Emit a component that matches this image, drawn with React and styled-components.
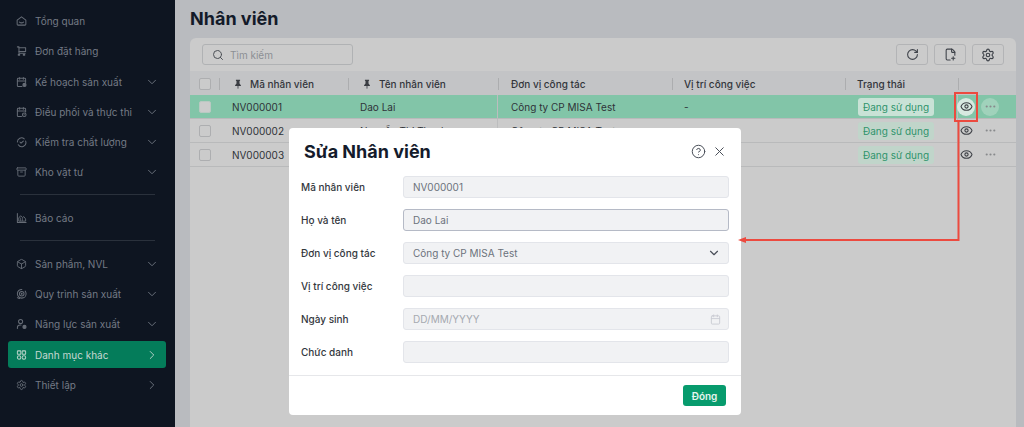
import React from "react";
import styled, { createGlobalStyle } from "styled-components";
import {
  Archive, Box, ChevronDown, ChevronRight, Search, RotateCw, FilePlus2, Eye, Ellipsis,
  CircleHelp, X, Calendar, Settings,
} from "lucide-react";

const Global = createGlobalStyle`
  html, body { margin: 0; padding: 0; height: 427px; overflow: hidden; background: #b9bbbf; }
  * { box-sizing: border-box; }
  body { font-family: Inter, "Liberation Sans", sans-serif; }
`;

const Page = styled.div`
  position: relative; width: 1024px; height: 427px; display: flex; overflow: hidden;
`;
const Sidebar = styled.nav`
  width: 175px; height: 427px; flex: none; background: #0e1521; padding: 6px 9px 0 8px;
  display: flex; flex-direction: column;
`;
const NavItem = styled.div`
  height: ${p => (p.$active ? "27px" : "30.25px")}; margin: ${p => (p.$active ? "1.6px 0" : "0")};
  display: flex; align-items: center; padding-left: 8px; padding-right: 7px; border-radius: 3px;
  background: ${p => (p.$active ? "#047c5a" : "transparent")};
  color: ${p => (p.$active ? "#c6d8d2" : "#747a85")};
  font-size: 10px; white-space: nowrap;
  flex: none;
`;
const NavIcon = styled.span`
  width: 11px; height: 12px; margin-right: 8px; display: flex; align-items: center; justify-content: center;
  flex: none; color: ${p => (p.$active ? "#b6d2c8" : "#666c76")};
`;
const NavLabel = styled.span` flex: 1; `;
const NavDivider = styled.div`
  height: 1px; background: #2a313c; margin: ${p => (p.$first ? "6px" : "7px")} 11px 8px 12px; flex: none;
`;

const Main = styled.main`
  flex: 1; min-width: 0; padding: 8px 8px 0 15px; display: flex; flex-direction: column;
`;
const Title = styled.h1`
  margin: 0 0 8px; height: 22px; line-height: 22px; font-size: 18px; font-weight: 700; color: #131a29;
`;
const Panel = styled.section`
  flex: 1; background: #cbcbcb; border-radius: 6px 6px 0 0; display: flex; flex-direction: column;
`;
const Toolbar = styled.div`
  height: 35px; display: flex; align-items: center; padding: 0 12px 0 12px; justify-content: space-between;
  flex: none; border-bottom: 2px solid #c3c4c6;
`;
const SearchBox = styled.div`
  width: 151px; height: 21px; border: 1px solid #b0b2b4; border-radius: 3px; display: flex; align-items: center;
  padding-left: 9px; gap: 6px; font-size: 10px; color: #8b8f94;
`;
const Tools = styled.div` display: flex; gap: 6px; `;
const ToolBtn = styled.button`
  width: 32px; height: 21px; padding: 0; border: 1px solid #b3b4b6; background: transparent; border-radius: 3px;
  display: flex; align-items: center; justify-content: center; color: #3f434a;
`;
const COLS = "29px 129px 150px 174px 173px 113px 58px";
const HeadRow = styled.div`
  display: grid; grid-template-columns: ${COLS}; height: 22px; background: #c3c4c6; align-items: center; flex: none;
`;
const HeadCell = styled.div`
  height: 100%; position: relative; display: flex; align-items: center; gap: 7px; padding-left: ${p => p.$pad ?? 9}px;
  font-size: 10px; font-weight: 500; color: #32353b; white-space: nowrap;
  &::before { content: ""; position: absolute; left: 0; top: 5px; bottom: 5px; width: 1px; background: #acadaf; }
  &:first-child::before { display: none; }
`;
const Row = styled.div`
  display: grid; grid-template-columns: ${COLS}; height: 24px; align-items: center; flex: none;
  background: ${p => (p.$selected ? "#82c5a8" : "transparent")};
  border-bottom: 1px solid #b9babb;
`;
const Cell = styled.div`
  font-size: 10px; color: #2f3338; padding-left: ${p => p.$pad ?? 12}px; white-space: nowrap; height: 100%;
  display: flex; align-items: center; border-right: ${p => (p.$line ? "1px solid #bcbdbe" : "none")};
  gap: ${p => p.$gap || 0}px;
`;
const Check = styled.span`
  width: 12px; height: 12px; border-radius: 2px; border: 1px solid #adaeb0; margin-left: 9px; display: block;
  background: ${p => (p.$selected ? "#cccccc" : "transparent")};
  ${p => (p.$selected ? "border-color:#b9c9c2;" : "")}
  ${p => (p.$head ? "background:#cbcbcb;" : "")}
`;
const Pill = styled.span`
  height: 18px; width: 76px; text-align: center; margin-left: 1px; border-radius: 3px; font-size: 10px; line-height: 18px; color: #2f946c;
  background: ${p => (p.$selected ? "#c9e2d6" : "#c0d5ca")};
`;
const RoundBtn = styled.span`
  width: 18px; height: 18px; border-radius: 50%; display: flex; align-items: center; justify-content: center;
  margin-left: ${p => p.$ml || 0}px;
  background: ${p => p.$bg || "transparent"}; color: ${p => p.$color || "#3d4046"};
`;

const Modal = styled.div`
  position: absolute; left: 289px; top: 128px; width: 452px; height: 287px; background: #fff; border-radius: 4px;
  display: flex; flex-direction: column;
`;
const ModalHead = styled.div`
  height: 44px; display: flex; align-items: center; padding: 3px 14px 0 15px; flex: none;
`;
const ModalTitle = styled.h2`
  margin: 0; flex: 1; font-size: 18px; font-weight: 700; color: #141b2b;
`;
const HeadIcons = styled.div` display: flex; gap: 6px; color: #4a4f59; align-items: center; `;
const Form = styled.div`
  flex: 1; padding: 4px 12px 0 12px; display: flex; flex-direction: column; gap: 11px;
`;
const FormRow = styled.div` display: flex; align-items: center; height: 22px; `;
const Label = styled.label`
  width: 102px; flex: none; font-size: 10px; font-weight: 500; color: #33373d;
`;
const Field = styled.div`
  flex: 1; height: 22px; background: #f1f2f4; border-radius: 3px; border: 1px solid ${p => (p.$focus ? "#b5bac6" : "#e3e5ea")};
  display: flex; align-items: center; justify-content: space-between; padding: 0 7px 0 9px; font-size: 10px;
  color: ${p => (p.$dim ? "#a5a9b0" : "#6c727c")};
`;
const ModalFoot = styled.div`
  height: 40px; border-top: 1px solid #e6e7ea; display: flex; justify-content: flex-end; align-items: flex-start;
  padding: 9px 15px 0 0; flex: none;
`;
const CloseBtn = styled.button`
  width: 43px; height: 21px; padding: 0; border: 0; border-radius: 3px; background: #079b6d; color: #e6f5ef;
  font: 600 10px Inter, "Liberation Sans", sans-serif;
`;
const Annotation = styled.svg`
  position: absolute; left: 0; top: 0; pointer-events: none;
`;

const Ico = ({ children, ...p }) => (
  <svg viewBox="0 0 24 24" width="12" height="12" fill="none" stroke="currentColor" strokeWidth="2.2" strokeLinecap="round" strokeLinejoin="round" {...p}>{children}</svg>
);
const HomeSmile = () => <Ico><path d="M2.5 10 12 3l9.5 7v9a2 2 0 0 1-2 2h-15a2 2 0 0 1-2-2z" /><path d="M7.5 14.5c2.8 2 6.2 2 9 0" /></Ico>;
const Cart = () => <Ico><path d="M3 3h3.5v14H20" /><path d="M6.5 5H21v8H6.5" /><rect x="5" y="19" width="3" height="2.5" /><rect x="16" y="19" width="3" height="2.5" /></Ico>;
const CalCheck = () => <Ico><path d="M21 13V6a2 2 0 0 0-2-2H5a2 2 0 0 0-2 2v14a2 2 0 0 0 2 2h8" /><path d="M8 2v4M16 2v4M3 10h18" /><circle cx="18.5" cy="18.5" r="3.5" fill="currentColor" /></Ico>;
const CalGear = () => <Ico><path d="M21 12V6a2 2 0 0 0-2-2H5a2 2 0 0 0-2 2v14a2 2 0 0 0 2 2h7" /><path d="M8 2v4M16 2v4M3 10h18" /><circle cx="18" cy="18" r="4" /><path d="m16.5 18 1 1 2-2" strokeWidth="1.4" /></Ico>;
const DashedCheck = () => <Ico><path d="M3 12a9 9 0 0 1 15-6.7M21 10a9 9 0 0 1-16 8" /><path d="m8.5 12 2.5 2.5L16 10" /></Ico>;
const Chart = () => <Ico><path d="M3 2v20h19" /><path d="M6 18v-6l4-5 4 4 3-2 4 5v4z" strokeWidth="2" /><path d="M10 18v-6M14 18v-5" strokeWidth="1.6" /></Ico>;
const Swirl = () => <Ico><circle cx="12.5" cy="11.5" r="9.5" strokeDasharray="44 8" /><circle cx="12.5" cy="11.5" r="5" /><path d="M3 20c2 1.5 3.5 2 5 2" /><circle cx="12.5" cy="11.5" r="1" /></Ico>;
const UserDot = () => <Ico><circle cx="10" cy="6.5" r="4.5" /><path d="M3 22v-2a6 6 0 0 1 6-6h2" /><circle cx="18.5" cy="18.5" r="3.5" fill="currentColor" /></Ico>;
const Grid = () => <Ico><rect x="3" y="3" width="7.5" height="7.5" rx="1.5" /><rect x="13.5" y="3" width="7.5" height="7.5" rx="1.5" /><circle cx="6.75" cy="17.25" r="3.75" /><rect x="13.5" y="13.5" width="7.5" height="7.5" rx="3.2" /></Ico>;
const Gear = () => <Settings size={12} strokeWidth={2} />;
const PinFilled = () => (
  <svg viewBox="0 0 12 12" width="10" height="10" fill="#3a3d43"><path d="M3.5 1h5v1l-.7.5V5.5L9.5 7.5v1h-3v2.7L6 12l-.5-.8V8.5h-3v-1l1.7-2V2.5L3.5 2z" /></svg>
);

const nav1 = [
  [HomeSmile, "Tổng quan"], [Cart, "Đơn đặt hàng"], [CalCheck, "Kế hoạch sản xuất", "d"],
  [CalGear, "Điều phối và thực thi", "d"], [DashedCheck, "Kiểm tra chất lượng", "d"],
  [() => <Archive size={12} strokeWidth={2} />, "Kho vật tư", "d"],
];
const nav2 = [
  [() => <Box size={12} strokeWidth={2} />, "Sản phẩm, NVL", "d"], [Swirl, "Quy trình sản xuất", "d"], [UserDot, "Năng lực sản xuất", "d"],
  [Grid, "Danh mục khác", "r", true], [Gear, "Thiết lập", "r"],
];

function Nav({ icon: I, label, arrow, active }) {
  return (
    <NavItem $active={active}>
      <NavIcon $active={active}><I /></NavIcon>
      <NavLabel>{label}</NavLabel>
      {arrow === "d" && <ChevronDown size={14} strokeWidth={1.5} />}
      {arrow === "r" && <ChevronRight size={14} strokeWidth={1.5} />}
    </NavItem>
  );
}

const rows = [
  ["NV000001", "Dao Lai", "Công ty CP MISA Test"],
  ["NV000002", "Nguyễn Thị Thanh", "Công ty CP MISA Test"],
  ["NV000003", "", ""],
];

export default function App() {
  return (
    <Page>
      <Global />
      <Sidebar>
        {nav1.map(([i, l, a]) => <Nav key={l} icon={i} label={l} arrow={a} />)}
        <NavDivider $first />
        <Nav icon={Chart} label="Báo cáo" />
        <NavDivider />
        {nav2.map(([i, l, a, act]) => <Nav key={l} icon={i} label={l} arrow={a} active={act} />)}
      </Sidebar>
      <Main>
        <Title>Nhân viên</Title>
        <Panel>
          <Toolbar>
            <SearchBox><Search size={12} color="#4d5157" />Tìm kiếm</SearchBox>
            <Tools>
              <ToolBtn><RotateCw size={13} /></ToolBtn>
              <ToolBtn><FilePlus2 size={13} /></ToolBtn>
              <ToolBtn><Settings size={14} /></ToolBtn>
            </Tools>
          </Toolbar>
          <HeadRow>
            <HeadCell $pad={0}><Check $head /></HeadCell>
            <HeadCell $pad={14}><PinFilled />Mã nhân viên</HeadCell>
            <HeadCell $pad={14}><PinFilled />Tên nhân viên</HeadCell>
            <HeadCell $pad={13}>Đơn vị công tác</HeadCell>
            <HeadCell $pad={12}>Vị trí công việc</HeadCell>
            <HeadCell $pad={12}>Trạng thái</HeadCell>
            <HeadCell />
          </HeadRow>
          {rows.map((r, i) => (
            <Row key={r[0]} $selected={i === 0}>
              <Cell $pad={0}><Check $selected={i === 0} /></Cell>
              <Cell $pad={13}>{r[0]}</Cell>
              <Cell $line>{r[1]}</Cell>
              <Cell $pad={13}>{r[2]}</Cell>
              <Cell $pad={12}>{i < 2 ? "-" : ""}</Cell>
              <Cell $line><Pill $selected={i === 0}>Đang sử dụng</Pill></Cell>
              <Cell $pad={0} $gap={6}>
                <RoundBtn $ml={-1} $bg={i === 0 ? "#d7e9e1" : "transparent"}><Eye size={13} /></RoundBtn>
                <RoundBtn $bg={i === 0 ? "#a0d2bb" : "transparent"} $color="#888a8c"><Ellipsis size={13} /></RoundBtn>
              </Cell>
            </Row>
          ))}
        </Panel>
      </Main>
      <Modal>
        <ModalHead>
          <ModalTitle>Sửa Nhân viên</ModalTitle>
          <HeadIcons><CircleHelp size={15} strokeWidth={1.6} /><X size={15} strokeWidth={1.6} /></HeadIcons>
        </ModalHead>
        <Form>
          <FormRow><Label>Mã nhân viên</Label><Field>NV000001</Field></FormRow>
          <FormRow><Label>Họ và tên</Label><Field $focus>Dao Lai</Field></FormRow>
          <FormRow><Label>Đơn vị công tác</Label><Field>Công ty CP MISA Test<ChevronDown size={14} color="#4a4f59" /></Field></FormRow>
          <FormRow><Label>Vị trí công việc</Label><Field /></FormRow>
          <FormRow><Label>Ngày sinh</Label><Field $dim>DD/MM/YYYY<Calendar size={11} color="#c9ccd2" /></Field></FormRow>
          <FormRow><Label>Chức danh</Label><Field /></FormRow>
        </Form>
        <ModalFoot><CloseBtn>Đóng</CloseBtn></ModalFoot>
      </Modal>
      <Annotation width="1024" height="427">
        <rect x="955" y="93" width="22" height="28" fill="none" stroke="#ec4a3f" strokeWidth="2" />
        <path d="M958.5 121V240H746" fill="none" stroke="#ec4a3f" strokeWidth="2" />
        <path d="M738 240l8-3v6z" fill="#ec4a3f" />
      </Annotation>
    </Page>
  );
}
